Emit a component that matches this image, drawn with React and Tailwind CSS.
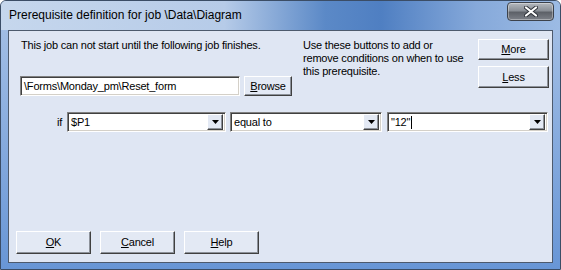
import React from 'react'

const ui = { fontFamily: '"Liberation Sans", Arial, sans-serif' }

function Btn({ children, className = '' }){
  return (
    <div className={'flex items-center justify-center bg-[#e3e9f4] text-black text-[11px] border border-t-white border-l-white border-r-[#404040] border-b-[#404040] shadow-[inset_-1px_-1px_0_#8d929a] ' + className}>
      {children}
    </div>
  )
}

function Arrow(){
  return (
    <div className="w-[16px] h-[16px] flex items-center justify-center bg-[#e3e9f4] border border-t-white border-l-white border-r-[#404040] border-b-[#404040] shadow-[inset_-1px_-1px_0_#8d929a]">
      <svg width="7" height="4" viewBox="0 0 7 4"><path d="M0 0h7L3.5 4z" fill="#000" /></svg>
    </div>
  )
}

function Combo({ value, caret, className = '' }){
  return (
    <div className={'h-[20px] flex items-center bg-white border border-t-[#808080] border-l-[#808080] border-r-white border-b-white shadow-[inset_1px_1px_0_#404040,inset_-1px_-1px_0_#d4d0c8] pl-[3px] pr-[2px] ' + className}>
      <span className="flex-1 text-[11px] text-black leading-none flex items-center">
        {value}
        {caret && <span className="inline-block w-[1px] h-[13px] bg-black ml-[1px]" />}
      </span>
      <Arrow />
    </div>
  )
}

export default function App(){
  return (
    <div style={ui} className="w-[561px] h-[270px] flex flex-col rounded-t-[6px] border border-[#3b4d66] bg-[linear-gradient(to_bottom,#a8c2e6,#6896d6)] overflow-hidden">
      {/* title bar */}
      <div className="h-[29px] flex items-center justify-between bg-[linear-gradient(90deg,#c6d7ed_0%,#b6cbe8_40%,#5b89c7_58%,#4f7fc2_68%,#86a9da_85%,#9cbbe4_100%)]">
        <span className="pl-[8px] pb-[2px] text-[12px] text-black">
          Prerequisite definition for job \Data\Diagram
        </span>
        <div className="self-start mt-[1px] mr-[6px] w-[47px] h-[19px] rounded-[4px] border border-[#3c424c] bg-[linear-gradient(to_bottom,#b4b8be_0%,#8a8f96_45%,#5d6168_55%,#7c8088_100%)] shadow-[inset_0_0_0_1px_rgba(255,255,255,0.35)] flex items-center justify-center">
          <svg width="14" height="11" viewBox="0 0 14 11">
            <path d="M2 1.5l10 8M12 1.5l-10 8" stroke="#2f333a" strokeWidth="4" strokeLinecap="round" />
            <path d="M2 1.5l10 8M12 1.5l-10 8" stroke="#fff" strokeWidth="2.2" strokeLinecap="round" />
          </svg>
        </div>
      </div>

      {/* client */}
      <div className="flex-1 flex px-[7px] pb-[6px]">
        <div className="flex-1 flex flex-col bg-[#dfe6f3] border border-[#4d5a6d] text-[11px] text-black tracking-[-0.2px]">
          <div className="flex pt-[8px] pl-[11px]">
            <div className="w-[272px] flex flex-col">
              <div className="ml-[1px] leading-[13px]">This job can not start until the following job finishes.</div>
              <div className="flex mt-[24px]">
                <div className="w-[220px] h-[20px] flex items-center bg-white border border-t-[#808080] border-l-[#808080] border-r-white border-b-white shadow-[inset_1px_1px_0_#404040,inset_-1px_-1px_0_#d4d0c8] pl-[3px]">
                  \Forms\Monday_pm\Reset_form
                </div>
                <Btn className="ml-[4px] w-[48px] h-[20px]"><span><u>B</u>rowse</span></Btn>
              </div>
            </div>
            <div className="ml-[11px] w-[175px] leading-[13px]">
              Use these buttons to add or<br />remove conditions on when to use<br />this prerequisite.
            </div>
            <div className="flex flex-col gap-[6px]">
              <Btn className="w-[71px] h-[21px]"><span><u>M</u>ore</span></Btn>
              <Btn className="w-[71px] h-[22px]"><span><u>L</u>ess</span></Btn>
            </div>
          </div>

          <div className="flex items-center mt-[16px] pl-[48px]">
            <span className="w-[10px]">if</span>
            <Combo value="$P1" className="w-[159px]" />
            <Combo value="equal to" className="w-[152px] ml-[4px]" />
            <Combo value={'"12"'} caret className="w-[161px] ml-[5px]" />
          </div>

          <div className="mt-auto flex gap-[9px] pl-[7px] pb-[8px]">
            <Btn className="w-[75px] h-[23px]"><span><u>O</u>K</span></Btn>
            <Btn className="w-[75px] h-[23px]"><span><u>C</u>ancel</span></Btn>
            <Btn className="w-[75px] h-[23px]"><span><u>H</u>elp</span></Btn>
          </div>
        </div>
      </div>
    </div>
  )
}
